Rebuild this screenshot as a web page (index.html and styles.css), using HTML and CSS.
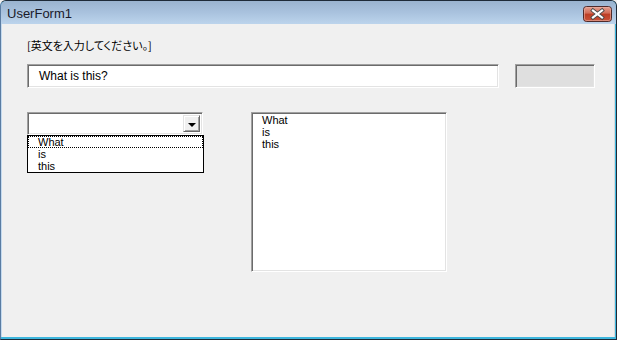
FILE: index.html
```html
<!DOCTYPE html>
<html lang="ja">
<head>
  <meta charset="UTF-8">
  <title>UserForm1</title>
  <link rel="stylesheet" href="styles.css">
</head>
<body>
  <div class="window">
    <div class="titlebar">
      <span class="title">UserForm1</span>
      <!-- close button -->
      <svg class="close-btn" width="29" height="16" viewBox="0 0 29 16">
        <defs>
          <linearGradient id="redGrad" x1="0" y1="0" x2="0" y2="1">
            <stop offset="0" stop-color="#e6a395"/>
            <stop offset="0.45" stop-color="#d16a55"/>
            <stop offset="0.5" stop-color="#bd3d24"/>
            <stop offset="1" stop-color="#c9533a"/>
          </linearGradient>
        </defs>
        <rect x="0.5" y="0.5" width="28" height="15" rx="3" fill="url(#redGrad)" stroke="#4f2a2a"/>
        <rect x="1.5" y="1.5" width="26" height="13" rx="2" fill="none" stroke="#e9b1a4" stroke-opacity="0.6"/>
        <path d="M10 4.5 L19 11.5 M19 4.5 L10 11.5" stroke="#4a4a4a" stroke-width="4" stroke-linecap="square"/>
        <path d="M10 4.5 L19 11.5 M19 4.5 L10 11.5" stroke="#ffffff" stroke-width="2.2" stroke-linecap="square"/>
      </svg>
    </div>

    <div class="client">
      <div class="prompt">[英文を入力してください。]</div>

      <div class="input-row">
        <div class="textbox">What is this?</div>
        <div class="readonly-box"></div>
      </div>

      <div class="list-row">
        <div class="combo-wrap">
          <div class="combo">
            <div class="combo-value"></div>
            <div class="combo-btn"><span class="arrow"></span></div>
          </div>
          <!-- open dropdown of the combobox -->
          <ul class="dropdown">
            <li class="focused">What</li>
            <li>is</li>
            <li>this</li>
          </ul>
        </div>

        <ul class="listbox">
          <li>What</li>
          <li>is</li>
          <li>this</li>
        </ul>
      </div>
    </div>
  </div>
</body>
</html>
```

FILE: styles.css
```css
body {
  margin: 0;
  padding: 0;
  background-color: #f0f0f0;
  font-family: "Liberation Sans", Arial, sans-serif;
  font-size: 12px;
  color: #000;
}

.window {
  width: 617px;
  height: 340px;
  box-sizing: border-box;
  border: 1px solid #1e2a38;
  border-left-color: #5a7ca2;
  border-radius: 6px 6px 0 0;
  background-color: #3db6dd;
  display: flex;
  flex-direction: column;
  overflow: hidden;
}

.titlebar {
  height: 23px;
  flex-shrink: 0;
  display: flex;
  align-items: center;
  justify-content: space-between;
  padding: 0 4px 0 6px;
  background: linear-gradient(to bottom, #9ab3cf 0%, #a9c2de 50%, #bcd4ec 100%);
}

.title {
  font-size: 13px;
  color: #1a1a2a;
  padding-top: 1px;
}

.close-btn {
  display: block;
  margin-top: 2px;
}

.client {
  flex: 1;
  margin: 0 1px 2px 1px;
  background-color: #f0f0f0;
  border-right: 1px solid #dadada;
  box-shadow: -1px 0 0 #c4daef;
  padding: 15px 0 0 25px;
}

.prompt {
  font-family: "Noto Sans CJK JP", sans-serif;
  font-feature-settings: "palt";
  font-size: 11px;
  line-height: 13px;
  height: 13px;
  margin-bottom: 12px;
}

.input-row {
  display: flex;
  gap: 16px;
}

/* sunken 3d edge shared by text controls */
.textbox, .readonly-box, .combo, .listbox {
  box-sizing: border-box;
  border: 1px solid;
  border-color: #a0a0a0 #ffffff #ffffff #a0a0a0;
  box-shadow: inset 1px 1px 0 #6b6b6b, inset -1px -1px 0 #e3e3e3;
}

.textbox {
  width: 472px;
  height: 24px;
  background-color: #fff;
  padding: 5px 0 0 11px;
  line-height: 13px;
}

.readonly-box {
  width: 80px;
  height: 24px;
  background-color: #dfdfdf;
}

.list-row {
  display: flex;
  gap: 48px;
  margin-top: 24px;
}

.combo-wrap {
  position: relative;
  width: 176px;
}

.combo {
  height: 23px;
  background-color: #fff;
  display: flex;
  justify-content: flex-end;
  padding: 2px;
}

.combo-btn {
  width: 17px;
  height: 100%;
  box-sizing: border-box;
  background-color: #f0f0f0;
  border: 1px solid;
  border-color: #e3e3e3 #696969 #696969 #e3e3e3;
  box-shadow: inset 1px 1px 0 #fff, inset -1px -1px 0 #a0a0a0;
  display: flex;
  align-items: center;
  justify-content: center;
}

.arrow {
  width: 0;
  height: 0;
  border-left: 4px solid transparent;
  border-right: 4px solid transparent;
  border-top: 4px solid #000;
  margin-top: 2px;
}

ul {
  list-style: none;
  margin: 0;
  padding: 0;
}

.dropdown {
  position: absolute;
  left: 0;
  top: 23px;
  width: 177px;
  box-sizing: border-box;
  background-color: #fff;
  border: 1px solid #000;
}

.dropdown li {
  height: 12px;
  font-size: 11px;
  line-height: 12px;
  padding-left: 10px;
  box-sizing: border-box;
}

.dropdown li.focused {
  outline: 1px dotted #000;
  outline-offset: -1px;
}

.listbox {
  width: 196px;
  height: 160px;
  background-color: #fff;
  padding: 1px 0 0 10px;
}

.listbox li {
  font-size: 11px;
  line-height: 12px;
}
```
